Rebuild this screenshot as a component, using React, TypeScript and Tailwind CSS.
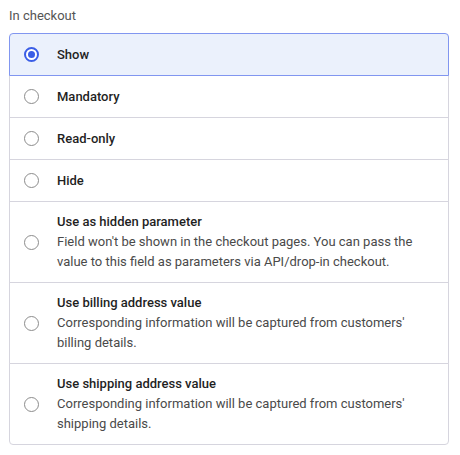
import React from 'react';

const options = [
  { title: 'Show' },
  { title: 'Mandatory' },
  { title: 'Read-only' },
  { title: 'Hide' },
  {
    title: 'Use as hidden parameter',
    desc: "Field won't be shown in the checkout pages. You can pass the value to this field as parameters via API/drop-in checkout.",
  },
  {
    title: 'Use billing address value',
    desc: "Corresponding information will be captured from customers' billing details.",
  },
  {
    title: 'Use shipping address value',
    desc: "Corresponding information will be captured from customers' shipping details.",
  },
];

function Radio({ checked }: { checked: boolean }) {
  return checked ? (
    <span className="flex h-[15px] w-[15px] shrink-0 items-center justify-center rounded-full border-[2px] border-[#3b5ee6] bg-white">
      <span className="h-[7px] w-[7px] rounded-full bg-[#3b5ee6]" />
    </span>
  ) : (
    <span className="h-[15px] w-[15px] shrink-0 rounded-full border border-[#8c8c8c] bg-white" />
  );
}

export default function App() {
  const selected = 0;
  return (
    <div className="min-h-screen bg-white px-[9px] pt-[6px] font-['Roboto',sans-serif] text-[13px]">
      <div className="mb-[7px] leading-5 text-[#555]">In checkout</div>
      <div className="flex w-[440px] flex-col">
        {options.map((o, i) => {
          const on = i === selected;
          const first = i === 0;
          const last = i === options.length - 1;
          return (
            <label
              key={o.title}
              className={[
                'relative flex items-center border py-[10px] pl-[14px] pr-4',
                first ? 'rounded-t-[4px]' : '-mt-px',
                last ? 'rounded-b-[4px]' : '',
                on ? 'z-10 border-[#8196f0] bg-[#ebf1fc]' : 'border-[#d6d5de] bg-white',
                o.desc ? '' : 'min-h-[43px]',
              ].join(' ')}
            >
              <Radio checked={on} />
              <div className="ml-[18px] leading-5">
                <div className="font-medium text-[#1f1f1f]">{o.title}</div>
                {o.desc && <div className="text-[#4a4a4a]">{o.desc}</div>}
              </div>
            </label>
          );
        })}
      </div>
    </div>
  );
}
